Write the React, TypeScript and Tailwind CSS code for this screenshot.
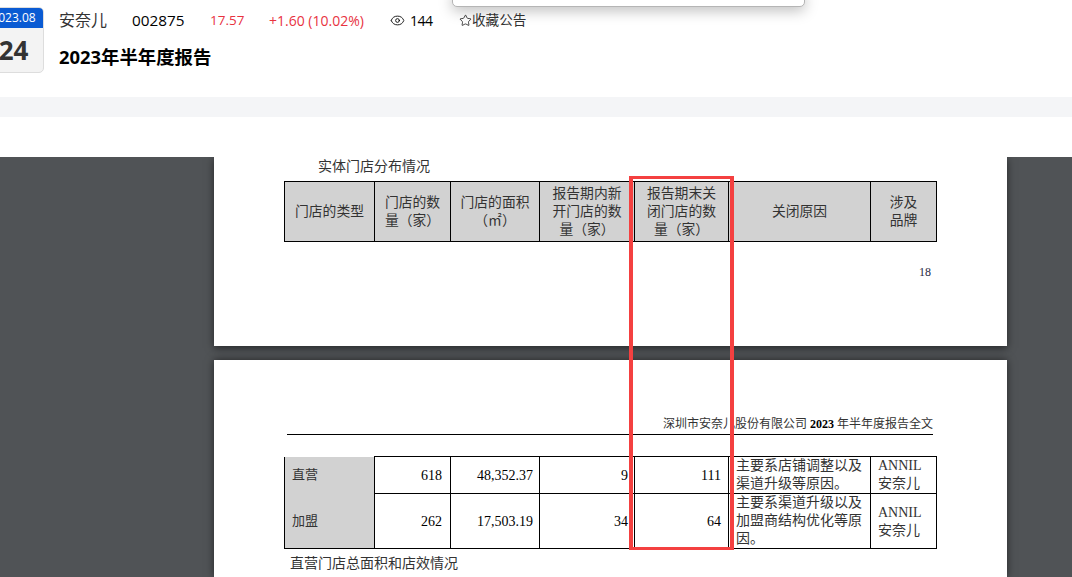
import { Eye, Star } from "lucide-react";

const headCell = "border border-black bg-[#d2d2d2] p-0 text-center align-middle text-[13.8px] leading-[18px] font-normal text-[#333]";
const nameCell = "border-x border-black bg-[#d2d2d2] pl-[7px] text-left text-[13px] text-[#333]";
const numCell = "border border-black pr-2 text-right text-[14px] text-black";
const reasonCell = "border border-black pl-[7px] pr-0 text-left align-bottom leading-[18px] text-[#333]";
const brandCell = "border border-black pl-[7px] text-left leading-[18px] text-[#333]";

const Columns = () => (
  <colgroup>
    <col className="w-[90px]" />
    <col className="w-[76px]" />
    <col className="w-[89px]" />
    <col className="w-[95px]" />
    <col className="w-[94px]" />
    <col className="w-[142px]" />
    <col className="w-[66px]" />
  </colgroup>
);

const Header = () => (
  <header className="flex h-[97px] overflow-hidden bg-white font-['Open_Sans','Noto_Sans_CJK_SC',sans-serif]">
    <div className="-ml-[17px] mt-[7px] flex h-[66px] w-[61px] shrink-0 flex-col overflow-hidden rounded-[5px] border border-[#dddddd] bg-[#f3f3f3]">
      <div className="flex h-[20px] items-center justify-center bg-[#0a5bd3] text-[12px] text-white">2023.08</div>
      <div className="flex flex-1 items-center justify-center text-[26px] font-bold text-[#333]">24</div>
    </div>
    <div className="ml-[15px]">
      <div className="mt-[8px] flex h-[24px] items-center text-[14px]">
        <span className="w-[73px] text-[16px] text-[#333]">安奈儿</span>
        <span className="w-[78px] text-[15.3px] text-black">002875</span>
        <span className="w-[59px] text-[13.5px] text-[#e8333f]">17.57</span>
        <span className="w-[121px] text-[#e8333f]">+1.60 (10.02%)</span>
        <Eye className="mr-[5px] h-[15px] w-[15px] text-black" strokeWidth={1.4} />
        <span className="w-[49px] tracking-[-0.5px] text-black">144</span>
        <Star className="h-[13px] w-[13px] text-black" strokeWidth={1.3} />
        <span className="text-[13.6px] text-[#333]">收藏公告</span>
      </div>
      <h1 className="mt-[12px] text-[18.4px] leading-[26px] font-bold text-black">2023年半年度报告</h1>
    </div>
  </header>
);

const App = () => {
  return (
    <div className="relative h-[577px] w-[1072px] overflow-hidden bg-white">
      <Header />
      <div className="h-[20px] bg-[#f4f5f7]" />
      <div className="h-[40px] bg-white" />

      <main className="flex h-[420px] flex-col gap-[14px] overflow-hidden bg-[#505356] pl-[214px] font-['Liberation_Serif','Noto_Sans_CJK_SC',serif] text-[14px]">
        <section className="relative z-10 h-[189px] w-[793px] shrink-0 bg-white pl-[70px] shadow-[0_2px_8px_rgba(0,0,0,0.55)]">
          <p className="ml-[34px] h-[24px] leading-[19px] text-[#333]">实体门店分布情况</p>
          <table className="w-[653px] table-fixed border-collapse">
            <Columns />
            <thead>
              <tr className="h-[60px]">
                <th className={headCell}>门店的类型</th>
                <th className={headCell}>门店的数<br />量（家）</th>
                <th className={headCell}>门店的面积<br />（㎡）</th>
                <th className={headCell}>报告期内新<br />开门店的数<br />量（家）</th>
                <th className={headCell}>报告期末关<br />闭门店的数<br />量（家）</th>
                <th className={headCell}>关闭原因</th>
                <th className={headCell}>涉及<br />品牌</th>
              </tr>
            </thead>
          </table>
          <p className="mt-[21px] w-[647px] text-right text-[12px] leading-[18px] text-[#1f2a44]">18</p>
        </section>

        <section className="w-[793px] flex-1 bg-white pl-[70px] shadow-[0_0_8px_rgba(0,0,0,0.55)]">
          <p className="mt-[55px] w-[649px] text-right text-[12px] leading-[18px] text-[#333]">
            深圳市安奈儿股份有限公司 <span className="font-bold text-black">2023</span> 年半年度报告全文
          </p>
          <div className="ml-[3px] mt-[1px] h-px w-[646px] bg-black" />
          <table className="mt-[21px] w-[653px] table-fixed border-collapse">
            <Columns />
            <tbody>
              <tr className="h-[37px]">
                <td className={nameCell}>直营</td>
                <td className={numCell}>618</td>
                <td className={`${numCell} pr-[6px]`}>48,352.37</td>
                <td className={`${numCell} pr-[6px]`}>9</td>
                <td className={`${numCell} pr-[7px]`}>111</td>
                <td className={reasonCell}>主要系店铺调整以及<br />渠道升级等原因。</td>
                <td className={`${brandCell} align-bottom`}>ANNIL<br />安奈儿</td>
              </tr>
              <tr className="h-[55px]">
                <td className={`${nameCell} border-b`}>加盟</td>
                <td className={numCell}>262</td>
                <td className={`${numCell} pr-[6px]`}>17,503.19</td>
                <td className={`${numCell} pr-[6px]`}>34</td>
                <td className={`${numCell} pr-[7px]`}>64</td>
                <td className={reasonCell}>主要系渠道升级以及<br />加盟商结构优化等原<br />因。</td>
                <td className={`${brandCell} pt-[2px]`}>ANNIL<br />安奈儿</td>
              </tr>
            </tbody>
          </table>
          <p className="ml-[6px] mt-[5px] leading-[19px] text-[#333]">直营门店总面积和店效情况</p>
        </section>
      </main>

      {/* popover peeking in from the top */}
      <div className="absolute -top-[10px] left-[452px] h-[17px] w-[353px] rounded-[5px] border border-[#b5b5b5] bg-white shadow-[0_4px_14px_rgba(0,0,0,0.25)]" />
      {/* red highlight drawn over the document */}
      <div className="absolute left-[629px] top-[176px] z-20 h-[374px] w-[105px] border-[3px] border-l-4 border-r-4 border-[#f44040]" />
    </div>
  );
};

export default App;
